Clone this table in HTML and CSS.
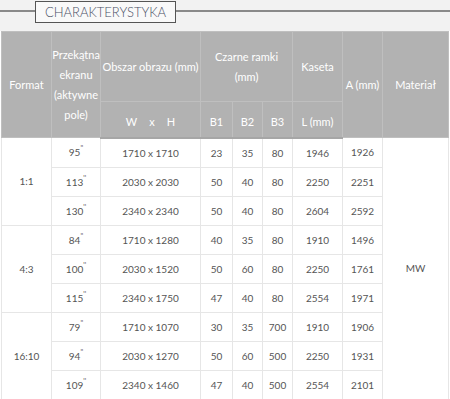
FILE: index.html
```html
<!DOCTYPE html>
<html>
<head>
    <title>Charakterystyka</title>
    <meta name="viewport" content="width=device-width, initial-scale=1">
    <link rel="stylesheet" href="styles.css">
</head>
<body>
    <div class="band">
        <div class="band-line short"></div>
        <div class="band-title">CHARAKTERYSTYKA</div>
        <div class="band-line"></div>
    </div>

    <table class="spec">
        <colgroup>
            <col class="c-format">
            <col class="c-diag">
            <col class="c-area">
            <col class="c-b">
            <col class="c-b2">
            <col class="c-b2">
            <col class="c-case">
            <col class="c-a">
            <col class="c-mat">
        </colgroup>
        <thead>
            <tr class="head-top">
                <th rowspan="2">Format</th>
                <th rowspan="2" class="tall">Przekątna<br>ekranu<br>(aktywne<br>pole)</th>
                <th>Obszar obrazu (mm)</th>
                <th colspan="3" class="tall">Czarne ramki<br>(mm)</th>
                <th>Kaseta</th>
                <th rowspan="2">A (mm)</th>
                <th rowspan="2">Materiał</th>
            </tr>
            <tr class="head-sub">
                <th class="wxh">W<span>x</span>H</th>
                <th>B<small>1</small></th>
                <th>B<small>2</small></th>
                <th>B<small>3</small></th>
                <th>L (mm)</th>
            </tr>
        </thead>
        <tbody>
            <tr>
                <td rowspan="3">1:1</td>
                <td>95<sup>''</sup></td><td>1710 x 1710</td><td>23</td><td>35</td><td>80</td><td>1946</td><td>1926</td>
                <td rowspan="9">MW</td>
            </tr>
            <tr><td>113<sup>''</sup></td><td>2030 x 2030</td><td>50</td><td>40</td><td>80</td><td>2250</td><td>2251</td></tr>
            <tr><td>130<sup>''</sup></td><td>2340 x 2340</td><td>50</td><td>40</td><td>80</td><td>2604</td><td>2592</td></tr>
            <tr>
                <td rowspan="3">4:3</td>
                <td>84<sup>''</sup></td><td>1710 x 1280</td><td>40</td><td>35</td><td>80</td><td>1910</td><td>1496</td>
            </tr>
            <tr><td>100<sup>''</sup></td><td>2030 x 1520</td><td>50</td><td>60</td><td>80</td><td>2250</td><td>1761</td></tr>
            <tr><td>115<sup>''</sup></td><td>2340 x 1750</td><td>47</td><td>40</td><td>80</td><td>2554</td><td>1971</td></tr>
            <tr>
                <td rowspan="3">16:10</td>
                <td>79<sup>''</sup></td><td>1710 x 1070</td><td>30</td><td>35</td><td>700</td><td>1910</td><td>1906</td>
            </tr>
            <tr><td>94<sup>''</sup></td><td>2030 x 1270</td><td>50</td><td>60</td><td>500</td><td>2250</td><td>1931</td></tr>
            <tr><td>109<sup>''</sup></td><td>2340 x 1460</td><td>47</td><td>40</td><td>500</td><td>2554</td><td>2101</td></tr>
        </tbody>
    </table>
</body>
</html>
```

FILE: styles.css
```css
body {
    margin: 0;
    font-family: Lato, "Open Sans", sans-serif;
    background: #fff;
    color: #555;
}
.band {
    display: flex;
    align-items: flex-start;
    height: 31px;
    background: #f2f2f2;
}
.band-line {
    flex: 1;
    height: 2px;
    margin-top: 10px;
    background: #8a8a8a;
}
.band-line.short {
    flex: 0 0 35px;
}
.band-title {
    margin-top: 1px;
    height: 20px;
    line-height: 20px;
    padding: 0 9px;
    border: 1px solid #555;
    background: #f9f9f9;
    color: #4a5066;
    font-size: 13px;
    font-weight: 300;
}
.spec {
    width: 447px;
    margin-left: 1px;
    border-collapse: collapse;
    table-layout: fixed;
    font-size: 10px;
}
.c-format { width: 50px; }
.c-diag { width: 49px; }
.c-area { width: 100px; }
.c-b { width: 32px; }
.c-b2 { width: 30px; }
.c-case { width: 50px; }
.c-a { width: 40px; }
.c-mat { width: 66px; }
.spec th {
    background: #b2b2b2;
    color: #fff;
    font-weight: normal;
    font-size: 11px;
    border: 1px solid #bfbfbf;
    padding: 0;
    text-align: center;
}
.spec th.tall {
    line-height: 20px;
}
.spec thead tr:last-child th {
    border-bottom: 2px solid #a6a6a6;
}
.head-top {
    height: 70px;
}
.head-sub {
    height: 36px;
}
.head-sub th {
    padding-top: 4px;
}
.wxh span {
    margin: 0 12px;
}
.spec th small {
    font-size: 11px;
}
.spec td {
    height: 28px;
    border: 1px solid #e6e6e6;
    padding: 0;
    text-align: center;
    color: #555;
}
.spec sup {
    font-size: 7px;
    vertical-align: 5px;
    line-height: 0;
}
```
